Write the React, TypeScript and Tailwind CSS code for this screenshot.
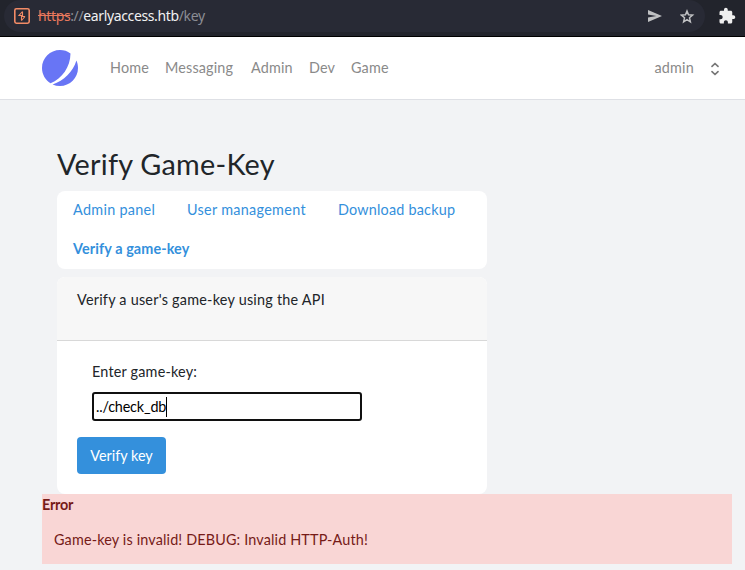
import React from "react";

const navLinks = [
  { label: "Home", cls: "w-[55px]" },
  { label: "Messaging", cls: "w-[86px]" },
  { label: "Admin", cls: "w-[58px]" },
  { label: "Dev", cls: "w-[42px]" },
  { label: "Game", cls: "w-[40px]" },
];

function AddressBar() {
  return (
    <header className="flex h-[37px] items-start border-b border-black bg-[#22242c] font-['Noto_Sans',sans-serif]">
      <div className="ml-1 flex h-8 w-[701px] shrink-0 items-center rounded-2xl bg-[#282a35] pl-[10px]">
        <svg className="size-4 shrink-0" viewBox="0 0 16 16" fill="none" stroke="#f28b66">
          <rect x="0.8" y="0.8" width="14.4" height="14.4" rx="1.6" strokeWidth="1.6" />
          <path d="M8.500 3.500 5 7.500H8.500V3.500M7.500 12.500V8.500H11" strokeWidth="1.100" />
          <path d="M11 8.500 7.500 12.500" strokeWidth="1.100" />
        </svg>
        <div className="ml-2 whitespace-pre text-[14px] leading-8 tracking-[-0.37px] text-[#8b8d94]">
          <span className="text-[#e9795d] line-through">https</span>://<span className="text-[#f1f1f2]">earlyaccess.htb</span>/key
        </div>
        <svg className="mr-[18px] ml-auto h-3 w-[14px]" viewBox="0 0 15 12" preserveAspectRatio="none" fill="#c0c1c3">
          <path d="M0 0 15 6 0 12V7.4L9 6 0 4.6z" />
        </svg>
        <svg className="mr-[10px] size-[15px]" viewBox="0 0 15 15" fill="none" stroke="#c0c1c3" strokeWidth="1.5">
          <path d="m7 2 1.500 3.700 4.100.4-3.100 2.700.9 4-3.400-2.100-3.400 2.100.9-4L1.400 6.100 5.500 5.700z" />
        </svg>
      </div>
      <svg className="mt-[7px] ml-[13px] size-[18px]" viewBox="0 0 24 24" fill="#efefef">
        <path d="M20.5 11H19V7c0-1.100-.9-2-2-2h-4V3.500C13 2.120 11.880 1 10.500 1S8 2.120 8 3.500V5H4c-1.100 0-1.990.9-1.990 2v3.800H3.500c1.490 0 2.700 1.210 2.700 2.700s-1.210 2.700-2.700 2.700H2V20c0 1.100.9 2 2 2h3.800v-1.500c0-1.490 1.210-2.700 2.700-2.700s2.700 1.210 2.700 2.700V22H17c1.100 0 2-.9 2-2v-4h1.500c1.380 0 2.500-1.120 2.500-2.500S21.880 11 20.500 11z" />
      </svg>
    </header>
  );
}

function Navigation() {
  return (
    <nav className="flex h-[63px] items-center border-b border-[#dee0e5] bg-white pr-[25px] pl-[42px] text-[#8a8a8a]">
      <svg className="size-9 shrink-0" viewBox="0 0 48 48" fill="#6875f5">
        <path d="M11.395 44.428C4.557 40.198 0 32.632 0 24 0 10.745 10.745 0 24 0a23.891 23.891 0 0113.997 4.502c-.2 17.907-11.097 33.245-26.602 39.926z" />
        <path d="M14.134 45.885A23.914 23.914 0 0024 48c13.255 0 24-10.745 24-24 0-3.516-.756-6.856-2.115-9.866-4.659 15.143-16.608 27.092-31.75 31.751z" />
      </svg>
      <div className="ml-[32px] flex tracking-[0.15px]">
        {navLinks.map((link) => (
          <a key={link.label} className={link.cls}>{link.label}</a>
        ))}
      </div>
      <span className="ml-auto tracking-[0.2px]">admin</span>
      <svg className="mt-[2px] ml-[16px] h-[14px] w-[10px]" viewBox="0 0 10 14" fill="none" stroke="#777" strokeWidth="1.7" strokeLinecap="round" strokeLinejoin="round">
        <path d="M2 4.300 5 1.500l3 2.800M2 9.700 5 12.500l3-2.800" />
      </svg>
    </nav>
  );
}

export default function App() {
  return (
    <div className="h-[570px] w-[745px] overflow-hidden bg-[#f2f3f5] font-['Lato',sans-serif] text-[14.4px] leading-[22px] text-[#212529]">
      <AddressBar />
      <Navigation />
      <main className="pt-[46px] pl-[42px]">
        <div className="w-[445px] pl-[15px]">
          <h2 className="h-[45px] text-[28.8px] leading-[36px] tracking-[0.25px] whitespace-nowrap">Verify Game-Key</h2>
          <div className="grid h-[78px] grid-cols-[114px_151px_1fr] content-start rounded-lg bg-white pt-[8px] pl-4 tracking-[0.3px] text-[#3490dc]">
            <a>Admin panel</a>
            <a>User management</a>
            <a className="tracking-[0.2px]">Download backup</a>
            <a className="col-span-3 mt-[17px] font-bold tracking-[0.1px]">Verify a game-key</a>
          </div>
          <section className="mt-2 h-[217px] overflow-hidden rounded-lg bg-white">
            <div className="h-[64px] border-b border-[#d8d8d8] bg-[#f7f7f7] pt-[12px] pl-[20px] tracking-[0.23px]">Verify a user's game-key using the API</div>
            <div className="flex flex-col items-start pt-[20px] pl-[20px]">
              <label className="ml-[15px] tracking-[0.2px]">Enter game-key:</label>
              <div className="mt-[9px] ml-[15px] flex h-[29px] w-[270px] items-center rounded-[3px] border-2 border-[#101010] bg-white pl-[2px] text-black">
                <span className="tracking-[-0.17px]">../check_db</span>
                <span className="h-5 w-px bg-black" />
              </div>
              <button className="mt-4 h-[37px] w-[89px] rounded-[4px] bg-[#3490dc] text-white">Verify key</button>
            </div>
          </section>
        </div>
        <div className="h-[70px] w-[690px] bg-[#f9d6d5] text-[#761b18]">
          <div className="font-bold tracking-[-0.2px]">Error</div>
          <p className="mt-[13px] ml-[12px] tracking-[0.15px]">Game-key is invalid! DEBUG: Invalid HTTP-Auth!</p>
        </div>
      </main>
    </div>
  );
}
